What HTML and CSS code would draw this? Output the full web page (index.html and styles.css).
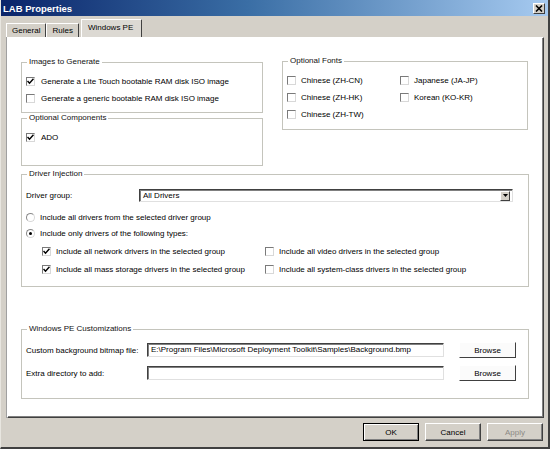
FILE: index.html
```html
<!DOCTYPE html>
<html>
<head>
<meta charset="utf-8">
<title>LAB Properties</title>
<link rel="stylesheet" href="styles.css">
</head>
<body>
<div class="window">
  <div class="titlebar">
    <span class="title">LAB Properties</span>
    <span class="close"><svg width="8" height="7" viewBox="0 0 8 7"><path d="M1 0.5 L7 6.5 M7 0.5 L1 6.5" stroke="#000" stroke-width="1.6"/></svg></span>
  </div>
  <div class="tabs">
    <div class="tab">General</div>
    <div class="tab">Rules</div>
    <div class="tab active">Windows PE</div>
  </div>
  <div class="panel">
    <div class="top">
      <div class="col">
        <fieldset class="group g-images">
          <legend>Images to Generate</legend>
          <div class="row"><span class="cb"><svg viewBox="0 0 7 7" width="7" height="7"><path d="M0.5 3 L2.5 5.2 L6.5 0.8" fill="none" stroke="#000" stroke-width="1.5"/></svg></span>Generate a Lite Touch bootable RAM disk ISO image</div>
          <div class="row"><span class="cb"></span>Generate a generic bootable RAM disk ISO image</div>
        </fieldset>
        <fieldset class="group g-comp">
          <legend>Optional Components</legend>
          <div class="row"><span class="cb"><svg viewBox="0 0 7 7" width="7" height="7"><path d="M0.5 3 L2.5 5.2 L6.5 0.8" fill="none" stroke="#000" stroke-width="1.5"/></svg></span>ADO</div>
        </fieldset>
      </div>
      <fieldset class="group g-fonts">
        <legend>Optional Fonts</legend>
        <div class="fontgrid">
          <div class="row"><span class="cb"></span>Chinese (ZH-CN)</div>
          <div class="row"><span class="cb"></span>Japanese (JA-JP)</div>
          <div class="row"><span class="cb"></span>Chinese (ZH-HK)</div>
          <div class="row"><span class="cb"></span>Korean (KO-KR)</div>
          <div class="row"><span class="cb"></span>Chinese (ZH-TW)</div>
        </div>
      </fieldset>
    </div>

    <fieldset class="group g-driver">
      <legend>Driver Injection</legend>
      <div class="field">
        <span class="flabel dl">Driver group:</span>
        <div class="select"><span class="sval">All Drivers</span><span class="sbtn"><svg width="5" height="3" viewBox="0 0 5 3"><path d="M0 0 H5 L2.5 3 Z" fill="#000"/></svg></span></div>
      </div>
      <div class="rrow first"><span class="radio"></span>Include all drivers from the selected driver group</div>
      <div class="rrow"><span class="radio on"></span>Include only drivers of the following types:</div>
      <div class="typegrid">
        <div class="crow"><span class="cb"><svg viewBox="0 0 7 7" width="7" height="7"><path d="M0.5 3 L2.5 5.2 L6.5 0.8" fill="none" stroke="#000" stroke-width="1.5"/></svg></span>Include all network drivers in the selected group</div>
        <div class="crow"><span class="cb"></span>Include all video drivers in the selected group</div>
        <div class="crow"><span class="cb"><svg viewBox="0 0 7 7" width="7" height="7"><path d="M0.5 3 L2.5 5.2 L6.5 0.8" fill="none" stroke="#000" stroke-width="1.5"/></svg></span>Include all mass storage drivers in the selected group</div>
        <div class="crow"><span class="cb"></span>Include all system-class drivers in the selected group</div>
      </div>
    </fieldset>

    <fieldset class="group g-pe">
      <legend>Windows PE Customizations</legend>
      <div class="field pe1">
        <span class="flabel pl">Custom background bitmap file:</span>
        <div class="input">E:\Program Files\Microsoft Deployment Toolkit\Samples\Background.bmp</div>
        <button class="browse">Browse</button>
      </div>
      <div class="field pe2">
        <span class="flabel pl">Extra directory to add:</span>
        <div class="input"></div>
        <button class="browse">Browse</button>
      </div>
    </fieldset>
  </div>
  <div class="footer">
    <button class="btn default">OK</button>
    <button class="btn">Cancel</button>
    <button class="btn disabled">Apply</button>
  </div>
</div>
</body>
</html>
```

FILE: styles.css
```css
* { box-sizing: border-box; }
html, body { margin: 0; padding: 0; }
body {
  width: 550px;
  height: 449px;
  overflow: hidden;
  font-family: "Liberation Sans", Arial, sans-serif;
  font-size: 8px;
  color: #000;
  background: #d4d0c8;
}
.window {
  width: 550px;
  height: 449px;
  background: #d4d0c8;
  display: flex;
  flex-direction: column;
  border-left: 1px solid #e8e6e0;
  border-right: 2px solid #404040;
  border-bottom: 2px solid #404040;
}
.titlebar {
  height: 16px;
  flex: none;
  background: linear-gradient(to right, #0a246a 0%, #3a6ea5 45%, #a6caf0 100%);
  display: flex;
  align-items: center;
  justify-content: space-between;
  padding: 0 3px 0 2px;
}
.title {
  color: #fff;
  font-weight: bold;
  font-size: 9.5px;
}
.close {
  width: 12px;
  height: 11px;
  background: #d4d0c8;
  border-top: 1px solid #fff;
  border-left: 1px solid #fff;
  border-right: 1px solid #404040;
  border-bottom: 1px solid #404040;
  display: flex;
  align-items: center;
  justify-content: center;
}
.tabs {
  height: 21px;
  flex: none;
  display: flex;
  align-items: flex-end;
  padding-left: 5px;
}
.tab {
  height: 14px;
  line-height: 13px;
  padding: 0 5px;
  border-top: 1px solid #fff;
  border-left: 1px solid #fff;
  border-right: 1px solid #404040;
  border-top-left-radius: 1px;
  border-top-right-radius: 1px;
}
.tab.active {
  height: 18px;
  line-height: 16px;
  margin-left: 2px;
  padding: 0 8px 0 6px;
  background: #dcd9d3;
}
.panel {
  flex: none;
  margin-left: 6px;
  width: 537px;
  height: 381px;
  background: #fff;
  border-top: 1px solid #fff;
  border-left: 1px solid #fff;
  border-right: 1px solid #404040;
  border-bottom: 1px solid #404040;
  box-shadow: inset -1px -1px 0 #808080, -1px 0 0 #a0a0a0;
  padding: 19px 14px 0 13px;
}
.top {
  display: grid;
  grid-template-columns: 242px 246px;
  column-gap: 19px;
  align-items: start;
}
.group {
  margin: 0;
  min-width: 0;
  border: 1px solid #c4c4bc;
  padding: 0 4px 0 4px;
}
.group legend {
  padding: 0 2px;
  margin-left: 1px;
  line-height: 10px;
  font-size: 8px;
  color: #111;
}
.g-images { height: 56px; padding-top: 6px; }
.g-comp { height: 53px; padding-top: 6px; }
.g-fonts { height: 74px; padding-top: 6px; margin-top: -1px; }
.row {
  display: flex;
  align-items: center;
  height: 17px;
  gap: 6px;
  white-space: nowrap;
}
.fontgrid {
  display: grid;
  grid-template-columns: 113px auto;
}
.fontgrid .row { gap: 5px; }
.cb {
  flex: none;
  width: 9px;
  height: 9px;
  background: #fff;
  border-top: 1px solid #7a7a7a;
  border-left: 1px solid #7a7a7a;
  border-right: 1px solid #d8d8d8;
  border-bottom: 1px solid #d8d8d8;
  display: flex;
  align-items: center;
  justify-content: center;
}
.g-driver {
  margin-top: 3px;
  height: 118px;
  padding-top: 10px;
}
.field {
  display: flex;
  align-items: center;
}
.flabel { flex: none; white-space: nowrap; }
.dl { width: 113px; }
.select {
  width: 374px;
  height: 13px;
  border-top: 1px solid #404040;
  border-left: 1px solid #404040;
  border-right: 1px solid #e0e0e0;
  border-bottom: 1px solid #e0e0e0;
  box-shadow: inset 1px 1px 0 #808080;
  display: flex;
  align-items: center;
  justify-content: space-between;
  padding: 0 2px 0 3px;
}
.sbtn {
  width: 10px;
  height: 10px;
  background: #d4d0c8;
  border-top: 1px solid #fff;
  border-left: 1px solid #fff;
  border-right: 1px solid #404040;
  border-bottom: 1px solid #404040;
  display: flex;
  align-items: center;
  justify-content: center;
}
.rrow {
  display: flex;
  align-items: center;
  height: 16px;
  gap: 5px;
  white-space: nowrap;
}
.rrow.first { margin-top: 7px; }
.radio {
  flex: none;
  width: 9px;
  height: 9px;
  border-radius: 50%;
  background: #fff;
  border: 1px solid #8a8a8a;
  border-right-color: #d8d8d8;
  border-bottom-color: #d8d8d8;
  display: flex;
  align-items: center;
  justify-content: center;
}
.radio.on::after {
  content: "";
  width: 3px;
  height: 3px;
  border-radius: 50%;
  background: #000;
}
.typegrid {
  margin-top: 2px;
  margin-left: 16px;
  display: grid;
  grid-template-columns: 223px auto;
  row-gap: 2px;
}
.crow {
  display: flex;
  align-items: center;
  height: 16px;
  gap: 5px;
  white-space: nowrap;
}
.g-pe {
  margin-top: 37px;
  height: 75px;
  padding-top: 7px;
}
.pl { width: 121px; }
.pe1, .pe2 { height: 18px; }
.pe2 { margin-top: 5px; }
.input {
  width: 297px;
  height: 14px;
  border-top: 1px solid #404040;
  border-left: 1px solid #404040;
  border-right: 1px solid #e0e0e0;
  border-bottom: 1px solid #e0e0e0;
  box-shadow: inset 1px 1px 0 #808080;
  padding: 0 3px;
  line-height: 12px;
  white-space: nowrap;
  overflow: hidden;
}
.browse {
  margin-left: 15px;
  width: 57px;
  height: 16px;
  font-family: inherit;
  font-size: 8px;
  background: #fbfbfb;
  border-top: 1px solid #fff;
  border-left: 1px solid #fff;
  border-right: 1px solid #404040;
  border-bottom: 1px solid #404040;
  padding: 0;
  color: #000;
}
.footer {
  flex: 1;
  display: flex;
  justify-content: flex-end;
  align-items: flex-start;
  gap: 6px;
  padding-top: 5px;
  padding-right: 5px;
}
.btn {
  width: 56px;
  height: 18px;
  font-family: inherit;
  font-size: 8px;
  color: #000;
  background: #d4d0c8;
  border-top: 1px solid #fff;
  border-left: 1px solid #fff;
  border-right: 1px solid #404040;
  border-bottom: 1px solid #404040;
  box-shadow: inset -1px -1px 0 #808080;
  padding: 0;
}
.btn.default {
  border: 1px solid #000;
  box-shadow: inset 1px 1px 0 #fff, inset -1px -1px 0 #808080;
}
.btn.disabled {
  color: #8c8a85;
}
```
